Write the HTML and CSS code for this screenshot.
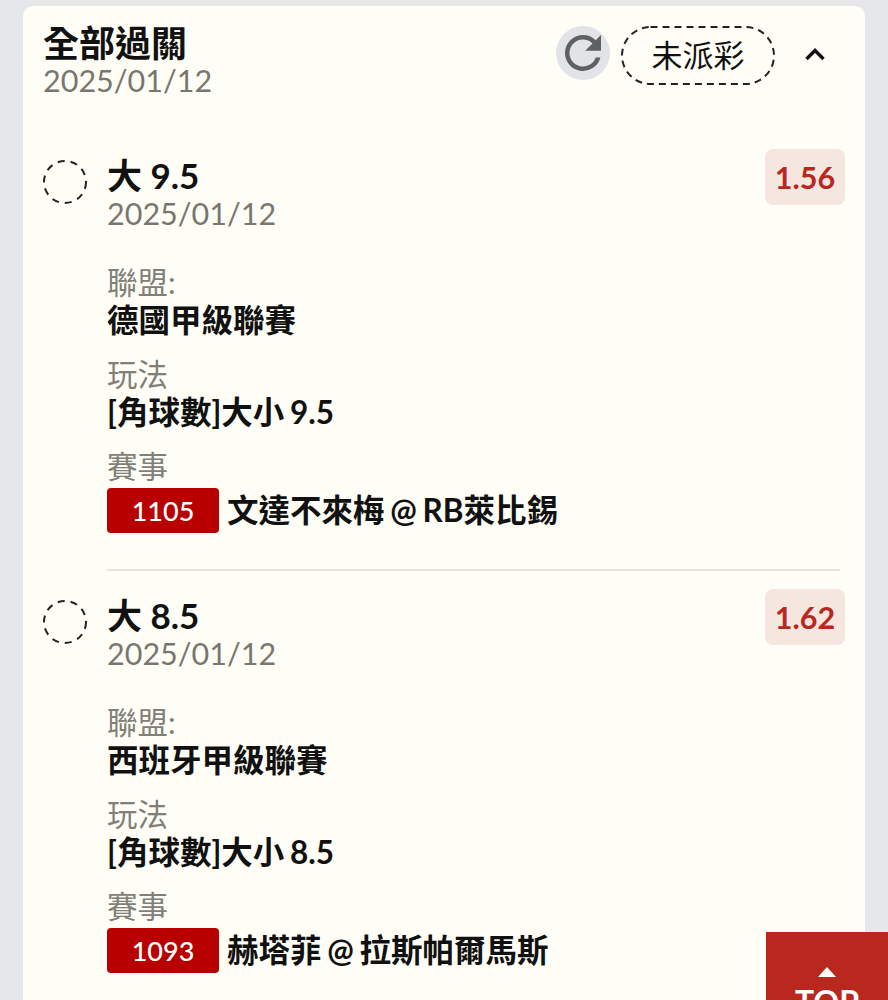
FILE: index.html
```html
<!DOCTYPE html>
<html lang="zh-Hant">
<head>
  <meta charset="UTF-8">
  <title>全部過關</title>
  <link rel="stylesheet" href="styles.css">
</head>
<body>

<div class="ticket">
  <div class="ticket-header">
    <div class="ticket-title">
      <h2>全部過關</h2>
      <div class="date">2025/01/12</div>
    </div>
    <div class="ticket-actions">
      <button class="btn-refresh">
        <svg width="54" height="54" viewBox="0 0 24 24"><path fill="#5f6062" d="M17.65 6.35A7.96 7.96 0 0 0 12 4a8 8 0 1 0 7.73 10h-2.08A6 6 0 1 1 12 6c1.66 0 3.14.69 4.22 1.78L13 11h7V4l-2.35 2.35z"/></svg>
      </button>
      <span class="status">
        <svg class="status-line" width="154" height="59" viewBox="0 0 154 59"><rect x="1" y="1" width="152" height="57" rx="28.5" fill="none" stroke="#222" stroke-width="2" stroke-dasharray="7 5"/></svg>
        未派彩
      </span>
      <svg class="chevron" width="22" height="14" viewBox="0 0 22 14"><path d="M2.5 12 11 3.5 19.5 12" fill="none" stroke="#111" stroke-width="3.4"/></svg>
    </div>
  </div>

  <div class="bet">
    <svg class="circle" width="44" height="44" viewBox="0 0 44 44"><circle cx="22" cy="22" r="21" fill="none" stroke="#222" stroke-width="2" stroke-dasharray="7 6"/></svg>
    <div class="bet-body">
      <div class="bet-top">
        <div>
          <div class="pick">大 9.5</div>
          <div class="date">2025/01/12</div>
        </div>
        <div class="odds">1.56</div>
      </div>
      <div class="field">
        <div class="label">聯盟:</div>
        <div class="value">德國甲級聯賽</div>
      </div>
      <div class="field">
        <div class="label">玩法</div>
        <div class="value">[角球數]大小 9.5</div>
      </div>
      <div class="field">
        <div class="label">賽事</div>
        <div class="value match"><span class="code">1105</span>文達不來梅 @ RB萊比錫</div>
      </div>
    </div>
  </div>

  <div class="bet">
    <svg class="circle" width="44" height="44" viewBox="0 0 44 44"><circle cx="22" cy="22" r="21" fill="none" stroke="#222" stroke-width="2" stroke-dasharray="7 6"/></svg>
    <div class="bet-body">
      <div class="bet-top">
        <div>
          <div class="pick">大 8.5</div>
          <div class="date">2025/01/12</div>
        </div>
        <div class="odds">1.62</div>
      </div>
      <div class="field">
        <div class="label">聯盟:</div>
        <div class="value">西班牙甲級聯賽</div>
      </div>
      <div class="field">
        <div class="label">玩法</div>
        <div class="value">[角球數]大小 8.5</div>
      </div>
      <div class="field">
        <div class="label">賽事</div>
        <div class="value match"><span class="code">1093</span>赫塔菲 @ 拉斯帕爾馬斯</div>
      </div>
    </div>
  </div>
</div>

<div class="to-top">
  <div class="arrow"></div>
  <div>TOP</div>
</div>

</body>
</html>
```

FILE: styles.css
```css
html, body {
  height: 100%;
  overflow: hidden;
}

body {
  font-family: Lato, "Noto Sans CJK TC", sans-serif;
  background-color: #E5E7EB;
  color: #111;
  margin: 0;
  padding: 6px 23px 0;
}

.ticket {
  background-color: #FFFEF6;
  border-radius: 10px;
  padding: 16px 20px 0;
  height: 1200px;
}

.ticket-header {
  display: flex;
  justify-content: space-between;
  margin-bottom: 55px;
}

h2 {
  font-size: 36px;
  font-weight: 700;
  line-height: 42px;
  margin: 0;
}

.date {
  font-size: 30.5px;
  line-height: 36px;
  color: #77776F;
  margin-top: -2px;
}

.ticket-actions {
  display: flex;
  align-items: center;
  height: 68px;
  margin-top: -1px;
}

.btn-refresh {
  width: 54px;
  height: 54px;
  border: none;
  border-radius: 50%;
  background-color: #E1E3E6;
  padding: 0;
  margin-bottom: 4px;
  display: flex;
  align-items: center;
  justify-content: center;
}

.status {
  position: relative;
  width: 154px;
  height: 59px;
  margin-left: 11px;
  font-size: 31px;
  line-height: 58px;
  text-align: center;
}

.status-line {
  position: absolute;
  left: 0;
  top: 0;
}

.chevron {
  margin: 0 19px 2px 29px;
}

.bet {
  display: flex;
  gap: 20px;
  margin-bottom: 22px;
}

.circle {
  margin-top: 7px;
  flex-shrink: 0;
}

.bet-body {
  flex: 1;
  padding-bottom: 36px;
  border-bottom: 2px solid #E5E5DF;
  margin-right: 5px;
}

.bet:last-child .bet-body {
  border-bottom: none;
}

.bet-top {
  display: flex;
  justify-content: space-between;
  align-items: flex-start;
  margin-right: -5px;
  margin-bottom: 32px;
}

.pick {
  font-size: 35px;
  font-weight: 700;
  line-height: 44px;
}

.odds {
  width: 80px;
  height: 56px;
  margin-top: -4px;
  background-color: #F6E6E0;
  border-radius: 8px;
  color: #B9281E;
  font-size: 30.5px;
  font-weight: 700;
  line-height: 57px;
  text-align: center;
}

.field {
  margin-bottom: 16px;
}

.field:last-child {
  margin-bottom: 0;
}

.label {
  font-size: 30.5px;
  line-height: 38px;
  color: #808078;
}

.value {
  font-size: 31.5px;
  font-weight: 700;
  line-height: 38px;
  word-spacing: -2px;
}

.match {
  display: flex;
  align-items: center;
  height: 46px;
  margin-top: 2px;
}

.code {
  width: 112px;
  height: 45px;
  margin-right: 8px;
  background-color: #B80000;
  border-radius: 4px;
  color: #FFF;
  font-size: 27px;
  font-weight: 500;
  line-height: 45px;
  text-align: center;
}

.to-top {
  position: fixed;
  left: 766px;
  top: 932px;
  width: 122px;
  height: 100px;
  background-color: #B9281E;
  color: #FFF;
  font-size: 32px;
  font-weight: 700;
  text-align: center;
  line-height: 38px;
}

.arrow {
  width: 0;
  height: 0;
  margin: 35px auto 6px;
  border-left: 9px solid transparent;
  border-right: 9px solid transparent;
  border-bottom: 10px solid #FFF;
}
```
